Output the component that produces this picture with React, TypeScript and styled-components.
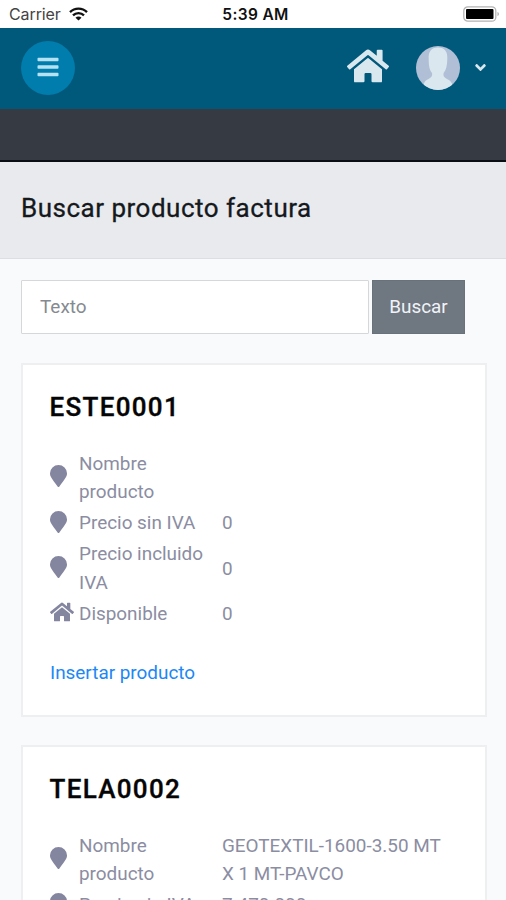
import React from "react";
import styled, { createGlobalStyle } from "styled-components";
import { FaAngleDown, FaBars, FaHome } from "react-icons/fa";

const GlobalStyle = createGlobalStyle`
  *, *::before, *::after { box-sizing: border-box; }
  html, body { margin: 0; padding: 0; }
  body { font-family: Roboto, sans-serif; background: #f9fafb; overflow: hidden; }
`;

const Screen = styled.div`
  display: flex;
  flex-direction: column;
  width: 506px;
  height: 900px;
  overflow: hidden;
  background: #f9fafb;
`;

const StatusBar = styled.div`
  display: grid;
  grid-template-columns: 1fr auto 1fr;
  align-items: center;
  flex: none;
  height: 28px;
  padding: 0 6px 0 9px;
  background: #fff;
  color: #111;
  font-family: Inter, sans-serif;
  font-size: 16px;
`;

const Carrier = styled.div`
  display: flex;
  align-items: center;
  gap: 8px;
  color: #444;
  letter-spacing: -0.1px;
`;

const Clock = styled.div`
  padding-left: 2px;
  font-size: 15.5px;
  font-weight: 600;
  letter-spacing: 0.35px;
`;

const BatteryIcon = styled.svg`
  justify-self: end;
`;

const TopBar = styled.header`
  display: flex;
  align-items: center;
  flex: none;
  height: 81px;
  padding: 0 17px 2px 21px;
  background: #00587a;
  color: #d9e8ef;
`;

const MenuButton = styled.button`
  display: flex;
  align-items: center;
  justify-content: center;
  width: 54px;
  height: 54px;
  margin-right: auto;
  padding: 0 1px 1px 0;
  border: 0;
  border-radius: 50%;
  background: #007cad;
  color: #b5e1f1;
`;

const HomeLink = styled.a`
  display: flex;
  margin: 0 27px 3px 0;
`;

const Avatar = styled.svg`
  margin-right: 12px;
`;

const SubBar = styled.div`
  flex: none;
  height: 53px;
  background: #363a42;
  border-bottom: 2px solid #0b0e12;
`;

const TitleBar = styled.div`
  flex: none;
  height: 97px;
  padding: 29px 21px 0;
  background: #e9eaee;
  border-bottom: 1px solid #dcdee1;
`;

const Title = styled.h1`
  margin: 0;
  font-size: 26px;
  line-height: 35px;
  font-weight: 400;
  letter-spacing: 0.5px;
  color: #15191d;
  -webkit-text-stroke: 0.3px #15191d;
`;

const Content = styled.main`
  display: flex;
  flex-direction: column;
  padding: 21px 19px 0 21px;
`;

const SearchForm = styled.div`
  display: flex;
  gap: 3px;
  height: 54px;
  margin-bottom: 29px;
`;

const SearchInput = styled.input`
  width: 348px;
  height: 54px;
  padding: 0 18px 2px;
  border: 1px solid #d5d7da;
  border-radius: 1px;
  background: #fff;
  font: 400 18.9px Roboto, sans-serif;
  &::placeholder { color: #858a91; opacity: 1; }
`;

const SearchButton = styled.button`
  width: 93px;
  height: 54px;
  padding: 0 0 2px;
  border: 1px solid #69727b;
  background: #6f7781;
  color: #f1f3f8;
  font: 400 18.9px Roboto, sans-serif;
`;

const Card = styled.section`
  flex: none;
  height: 354px;
  margin-bottom: 28px;
  padding: 24px 27px 0;
  border: 2px solid #eeeff1;
  background: #fff;
`;

const CardTitle = styled.h2`
  margin: 0 0 25px -0.5px;
  font-size: 26px;
  line-height: 36px;
  font-weight: 500;
  letter-spacing: 1.3px;
  color: #050505;
  -webkit-text-stroke: 0.35px #050505;
`;

const Fields = styled.div`
  display: grid;
  row-gap: 2.7px;
`;

const Field = styled.div`
  display: grid;
  grid-template-columns: 29px 143px 226px;
  align-items: center;
  font-size: 18.9px;
  line-height: 28.35px;
  color: #8b8da2;
`;

const FieldIcon = styled.span`
  display: flex;
  margin-bottom: 4px;
  color: #8486a0;
`;

const PinIcon = styled.svg`
  width: 17px;
  height: 22px;
`;

const Label = styled.span<{ $narrow?: boolean }>`
  width: ${(p) => (p.$narrow ? 100 : 135)}px;
`;

const InsertLink = styled.a`
  display: block;
  margin-top: 31px;
  font-size: 18.9px;
  line-height: 28px;
  color: #1c87f5;
`;

type Product = { code: string; name: string; net: string; gross: string; stock: string };

const products: Product[] = [
  { code: "ESTE0001", name: "", net: "0", gross: "0", stock: "0" },
  { code: "TELA0002", name: "GEOTEXTIL-1600-3.50 MT X 1 MT-PAVCO", net: "7.470.000", gross: "0", stock: "0" },
];

function Pin() {
  return (
    <FieldIcon>
      <PinIcon viewBox="0 0 384 512" preserveAspectRatio="none" fill="currentColor">
        <path d="M172 502C27 291 0 270 0 192a192 192 0 0 1 384 0c0 78-27 99-172 310a24 24 0 0 1-40 0z" />
      </PinIcon>
    </FieldIcon>
  );
}

function ProductCard({ product }: { product: Product }) {
  return (
    <Card>
      <CardTitle>{product.code}</CardTitle>
      <Fields>
        <Field><Pin /><Label $narrow>Nombre producto</Label><span>{product.name}</span></Field>
        <Field><Pin /><Label>Precio sin IVA</Label><span>{product.net}</span></Field>
        <Field><Pin /><Label>Precio incluido IVA</Label><span>{product.gross}</span></Field>
        <Field><FieldIcon><FaHome size={24} /></FieldIcon><Label>Disponible</Label><span>{product.stock}</span></Field>
      </Fields>
      <InsertLink>Insertar producto</InsertLink>
    </Card>
  );
}

export default function App() {
  return (
    <Screen>
      <GlobalStyle />
      <StatusBar>
        <Carrier>
          Carrier
          <svg width="19" height="14" viewBox="0 0 19 14" fill="none" stroke="#111" strokeWidth="2.3">
            <path d="M1 5.1a12 12 0 0 1 17 0M4 8.4a7.7 7.7 0 0 1 11 0" />
            <path d="M9.5 13.5 6.5 10.7a4.2 4.2 0 0 1 6 0z" fill="#111" stroke="none" />
          </svg>
        </Carrier>
        <Clock>5:39 AM</Clock>
        <BatteryIcon width="37" height="16" viewBox="0 0 37 16">
          <rect x="0.8" y="0.8" width="32" height="14.4" rx="4" fill="#fff" stroke="#b3b3b3" strokeWidth="1.3" />
          <rect x="3" y="3" width="27.5" height="10" rx="1" fill="#000" />
          <path d="M34.5 6v4c1.8-.5 1.8-3.5 0-4z" fill="#aaa" />
        </BatteryIcon>
      </StatusBar>
      <TopBar>
        <MenuButton aria-label="Menú"><FaBars size={24} /></MenuButton>
        <HomeLink><FaHome size={42} /></HomeLink>
        <Avatar width="44" height="44" viewBox="0 0 44 44">
          <defs><clipPath id="avatar"><circle cx="22" cy="22" r="22" /></clipPath></defs>
          <g clipPath="url(#avatar)">
            <rect width="44" height="44" fill="#b0bfd5" />
            <path d="M22 1.5c-7 0-9.8 4.5-9.3 11.5C12.700 20 13.500 24 16 27c.6 3-.5 4.500-3.500 6C8.500 35 7 37 7 44h30c0-7-2-9-6-11-3-1.500-4-3-3.400-6 2.500-3 3.500-7 3.700-14C31.800 6 29 1.500 22 1.500z" fill="#dae7ee" />
          </g>
        </Avatar>
        <FaAngleDown size={17} />
      </TopBar>
      <SubBar />
      <TitleBar><Title>Buscar producto factura</Title></TitleBar>
      <Content>
        <SearchForm>
          <SearchInput placeholder="Texto" />
          <SearchButton>Buscar</SearchButton>
        </SearchForm>
        {products.map((p) => <ProductCard key={p.code} product={p} />)}
      </Content>
    </Screen>
  );
}
